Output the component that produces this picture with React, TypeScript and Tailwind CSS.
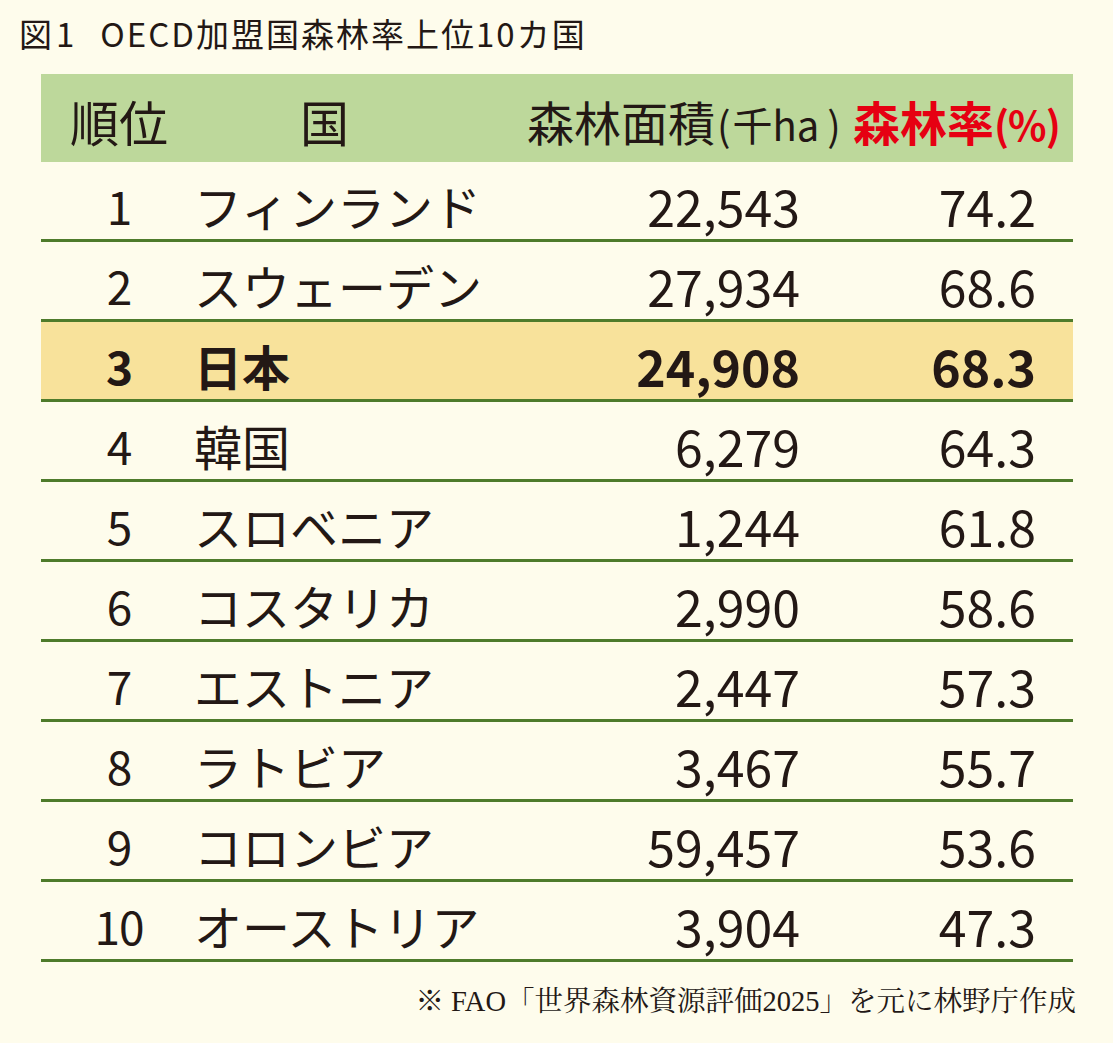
// 図1 OECD加盟国森林率上位10カ国

const rows = [
  { rank: '1', name: 'フィンランド', area: '22,543', rate: '74.2' },
  { rank: '2', name: 'スウェーデン', area: '27,934', rate: '68.6' },
  { rank: '3', name: '日本', area: '24,908', rate: '68.3', highlight: true },
  { rank: '4', name: '韓国', area: '6,279', rate: '64.3' },
  { rank: '5', name: 'スロベニア', area: '1,244', rate: '61.8' },
  { rank: '6', name: 'コスタリカ', area: '2,990', rate: '58.6' },
  { rank: '7', name: 'エストニア', area: '2,447', rate: '57.3' },
  { rank: '8', name: 'ラトビア', area: '3,467', rate: '55.7' },
  { rank: '9', name: 'コロンビア', area: '59,457', rate: '53.6' },
  { rank: '10', name: 'オーストリア', area: '3,904', rate: '47.3' },
];

const sans = "font-['Noto_Sans_CJK_JP',sans-serif]";

export default function App() {
  return (
    <div className={`min-h-[1043px] w-[1113px] bg-[#fefcec] text-[#231815] ${sans}`}>
      <h1 className="pl-[19px] pt-[13px] text-[33px] font-normal leading-[40px]">
        図<span className="ml-[4px]">1</span>
        <span className="ml-[26px] tracking-[2px]">OECD加盟国森林率上位10カ国</span>
      </h1>

      <div className="ml-[41px] mt-[21px] w-[1032px]">
        {/* header */}
        <div className="flex h-[88px] items-center bg-[#bdd89b] pt-[4px]">
          <div className="w-[156px] text-center text-[49px] leading-none">順位</div>
          <div className="w-[330px] pl-[103px] text-[49px] leading-none">国</div>
          <div className="w-[326px] whitespace-nowrap text-[47px] leading-none">
            森林面積
            <span className="text-[40px]">
              <span className="mx-[2px]">(</span>千ha<span className="ml-[8px]">)</span>
            </span>
          </div>
          <div className="whitespace-nowrap text-[47px] font-bold leading-none text-[#e60012]">
            森林率<span className="text-[40px] tracking-[-1px]">(%)</span>
          </div>
        </div>

        {/* rows */}
        {rows.map((r) => (
          <div
            key={r.rank}
            className={`flex h-[80px] items-center border-b-[3px] border-[#4e7b2b] pt-[8px] ${
              r.highlight ? 'bg-[#f8e29b] font-bold' : ''
            }`}
          >
            <div className="w-[156px] text-center text-[46px] leading-none tracking-[-1px]">{r.rank}</div>
            <div className="w-[330px] -ml-[3px] whitespace-nowrap text-[48px] leading-none">{r.name}</div>
            <div className="w-[276px] text-right text-[50px] leading-none">{r.area}</div>
            <div className="w-[236px] text-right text-[50px] leading-none">{r.rate}</div>
          </div>
        ))}
      </div>

      <p className="mr-[37px] mt-[26px] text-right font-['Liberation_Serif','Noto_Serif_CJK_JP','Noto_Sans_CJK_JP',serif] text-[28.5px] leading-none">
        ※ FAO「世界森林資源評価2025」を元に林野庁作成
      </p>
    </div>
  );
}
